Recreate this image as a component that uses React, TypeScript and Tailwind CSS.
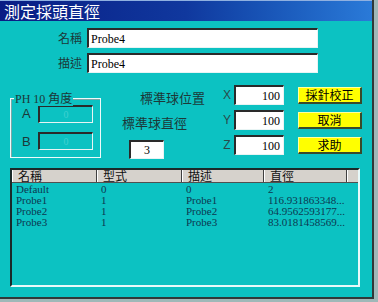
import React from "react";

const cjk = { fontFamily: '"Noto Sans CJK TC", "Noto Sans CJK SC", sans-serif' };
const serif = { fontFamily: '"Liberation Serif", "Noto Sans CJK TC", serif' };
const sans = { fontFamily: '"Liberation Sans", "Noto Sans CJK TC", sans-serif' };

function Sunken({ className = "", children }: { className?: string; children?: React.ReactNode }) {
  return (
    <div
      className={`border-t-2 border-l-2 border-b border-r border-t-[#2a2a2a] border-l-[#2a2a2a] border-b-[#e8f4f4] border-r-[#e8f4f4] ${className}`}
    >
      {children}
    </div>
  );
}

const rows = [
  ["Default", "0", "0", "2"],
  ["Probe1", "1", "Probe1", "116.931863348..."],
  ["Probe2", "1", "Probe2", "64.9562593177..."],
  ["Probe3", "1", "Probe3", "83.0181458569..."],
];

export default function App() {
  return (
    <div className="w-[378px] h-[302px] bg-[#9fb8b8] overflow-hidden">
      <div className="w-[374px] h-[299px] flex flex-col bg-[#0cc2c2] border-r-2 border-b-2 border-r-[#303838] border-b-[#303838]">
        {/* Title bar */}
        <div className="h-[21px] flex items-start pl-[4px] bg-gradient-to-r from-[#0a1c84] via-[#10389e] to-[#2a7ad8] shadow-[inset_0_1px_0_#8fb0e0]">
          <span className="text-white text-[16px] leading-[23px]" style={cjk}>
            測定採頭直徑
          </span>
        </div>

        {/* Name row */}
        <div className="flex items-center mt-[7px] h-[20px]">
          <span className="ml-[58px] w-[29px] text-[12px] text-[#1c3838]" style={cjk}>名稱</span>
          <Sunken className="w-[231px] h-[20px] bg-white flex items-center pl-[2px]">
            <span className="text-[12px] leading-[14px] text-black" style={serif}>Probe4</span>
          </Sunken>
        </div>
        {/* Description row */}
        <div className="flex items-center mt-[5px] h-[20px]">
          <span className="ml-[58px] w-[29px] text-[12px] text-[#1c3838]" style={cjk}>描述</span>
          <Sunken className="w-[231px] h-[20px] bg-white flex items-center pl-[2px]">
            <span className="text-[12px] leading-[14px] text-black" style={serif}>Probe4</span>
          </Sunken>
        </div>

        {/* Middle section */}
        <div className="flex h-[95px]">
          {/* Group box */}
          <div className="ml-[10px] mt-[25px] w-[91px] h-[60px] relative border border-[#eefafa] shadow-[inset_1px_1px_0_#7aa8a8]">
            <span
              className="absolute left-[3px] top-[-8px] px-[1px] bg-[#0cc2c2] text-[12px] leading-[14px] text-[#1c3838]"
              style={serif}
            >
              PH 10 <span style={cjk}>角度</span>
            </span>
            <div className="flex items-center mt-[5px]">
              <span className="ml-[11px] w-[16px] text-[13px] text-[#1c3838]" style={sans}>A</span>
              <Sunken className="w-[55px] h-[18px] flex items-center justify-center">
                <span className="text-[10px] text-[#40d0d0]" style={serif}>0</span>
              </Sunken>
            </div>
            <div className="flex items-center mt-[8px]">
              <span className="ml-[11px] w-[16px] text-[13px] text-[#1c3838]" style={sans}>B</span>
              <Sunken className="w-[55px] h-[18px] flex items-center justify-center">
                <span className="text-[10px] text-[#40d0d0]" style={serif}>0</span>
              </Sunken>
            </div>
          </div>

          {/* Ball labels */}
          <div className="ml-[21px] w-[100px] flex flex-col">
            <span className="mt-[17px] ml-[18px] text-[13px] leading-[16px] text-[#1c3838]" style={cjk}>標準球位置</span>
            <span className="mt-[9px] text-[13px] leading-[16px] text-[#1c3838]" style={cjk}>標準球直徑</span>
            <Sunken className="mt-[9px] ml-[7px] w-[35px] h-[19px] bg-white flex items-center justify-center">
              <span className="text-[12px] leading-[14px] text-black" style={serif}>3</span>
            </Sunken>
          </div>

          {/* XYZ */}
          <div className="w-[62px] flex flex-col mt-[12px]">
            {["X", "Y", "Z"].map((l, i) => (
              <div key={l} className={`flex items-center h-[20px] ${i > 0 ? "mt-[5px]" : ""}`}>
                <span className="w-[12px] text-center text-[12px] text-[#2a4a4a] ml-[-1px] mr-[1px]" style={sans}>{l}</span>
                <Sunken className="ml-[0px] w-[50px] h-[20px] bg-white flex items-center justify-end pr-[3px]">
                  <span className="text-[12px] leading-[14px] text-black" style={serif}>100</span>
                </Sunken>
              </div>
            ))}
          </div>

          {/* Buttons */}
          <div className="ml-[14px] w-[64px] flex flex-col mt-[14px]">
            {["採針校正", "取消", "求助"].map((b, i) => (
              <div
                key={b}
                className={`h-[17px] bg-[#ffff00] flex items-center justify-center border-t border-l border-t-[#ffffa0] border-l-[#ffffa0] border-b-2 border-r-2 border-b-[#3a4a2a] border-r-[#3a4a2a] ${i > 0 ? "mt-[8px]" : ""}`}
              >
                <span className="text-[12px] leading-[14px] text-black" style={cjk}>{b}</span>
              </div>
            ))}
          </div>
        </div>

        {/* List view */}
        <div className="ml-[10px] mt-[0px] w-[350px] h-[119px] border-t-2 border-l-2 border-b-2 border-r-2 border-t-[#1a2a2a] border-l-[#1a2a2a] border-b-[#e8fafa] border-r-[#e8fafa] flex flex-col">
          <div className="flex h-[13px] bg-[#d6d2cc] border-b border-b-[#505050]">
            {[
              ["名稱", "w-[85px]"],
              ["型式", "w-[85px]"],
              ["描述", "w-[82px]"],
              ["直徑", "w-[83px]"],
            ].map(([t, w]) => (
              <div key={t} className={`${w} h-full border-r border-r-[#404040] border-l border-l-white pl-[5px] flex items-center`}>
                <span className="text-[12px] leading-[12px] text-[#101010]" style={cjk}>{t}</span>
              </div>
            ))}
            <div className="flex-1 h-full border-l border-l-white" />
          </div>
          <div className="flex flex-col pt-[1px]">
            {rows.map((r) => (
              <div key={r[0]} className="flex h-[11px]">
                {r.map((c, i) => (
                  <span
                    key={i}
                    className={`${["w-[85px]", "w-[85px]", "w-[82px]", "w-[83px]"][i]} pl-[4px] text-[11px] leading-[11px] text-[#0c3850] whitespace-nowrap`}
                    style={serif}
                  >
                    {c}
                  </span>
                ))}
              </div>
            ))}
          </div>
        </div>
      </div>
    </div>
  );
}
